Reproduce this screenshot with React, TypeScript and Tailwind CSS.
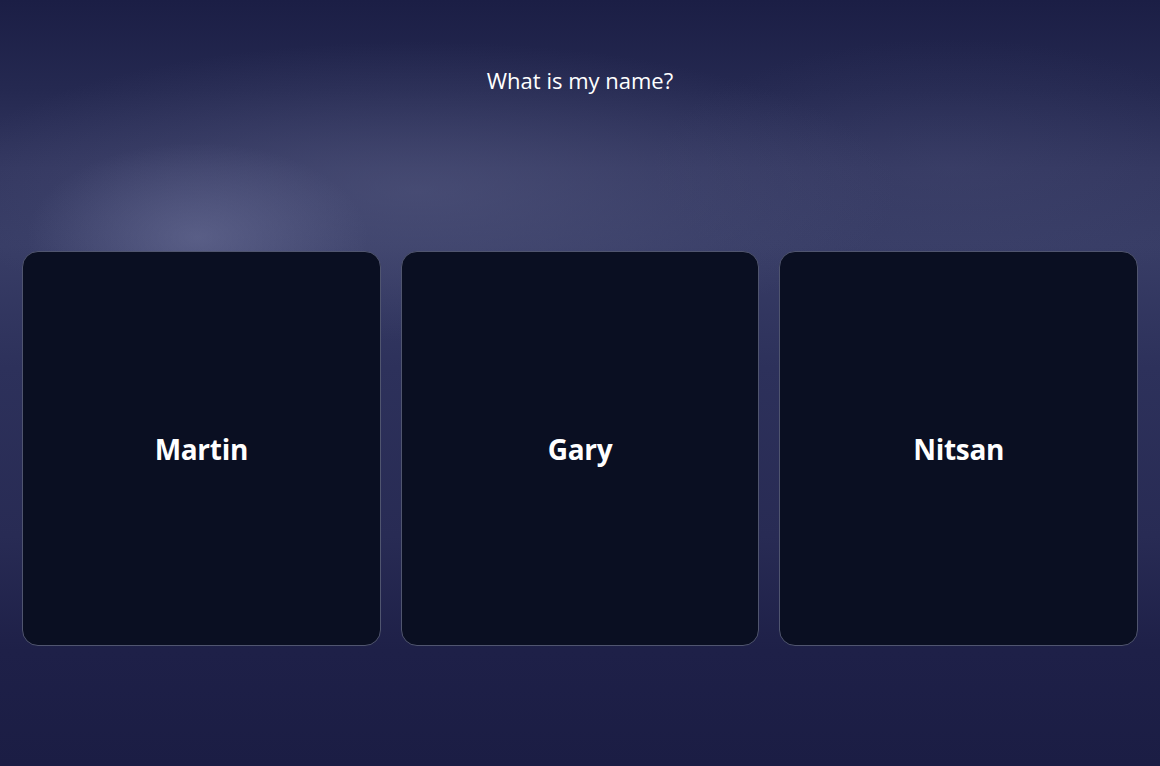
const names = ["Martin", "Gary", "Nitsan"];

export default function App() {
  return (
    <div
      className="min-h-screen w-full px-[22px] bg-[radial-gradient(ellipse_170px_95px_at_17%_31%,rgba(115,120,160,0.5)_0%,transparent_100%),radial-gradient(ellipse_480px_150px_at_36%_25%,rgba(88,93,132,0.5)_0%,transparent_100%),radial-gradient(ellipse_300px_130px_at_82%_22%,rgba(70,75,115,0.3)_0%,transparent_100%),linear-gradient(180deg,#1b1e45_0%,#252951_12%,#333760_22%,#383d66_32%,#2d315b_48%,#282b54_70%,#1e2048_85%,#1b1d44_100%)]"
      style={{ fontFamily: '"Open Sans", "Noto Sans", sans-serif' }}
    >
      {/* QUESTION */}
      <p className="pt-[67px] text-center text-[22px] leading-[26px] font-medium text-white">
        What is my name?
      </p>

      {/* ANSWERS */}
      <div className="mt-[158px] grid grid-cols-3 gap-[20px]">
        {names.map((name) => (
          <button
            key={name}
            className="h-[395px] rounded-[16px] border border-[#50556f] bg-[#0a0f22] flex items-center justify-center cursor-pointer"
          >
            <span className="text-[28px] font-bold text-white tracking-[-0.3px]">
              {name}
            </span>
          </button>
        ))}
      </div>
    </div>
  );
}
